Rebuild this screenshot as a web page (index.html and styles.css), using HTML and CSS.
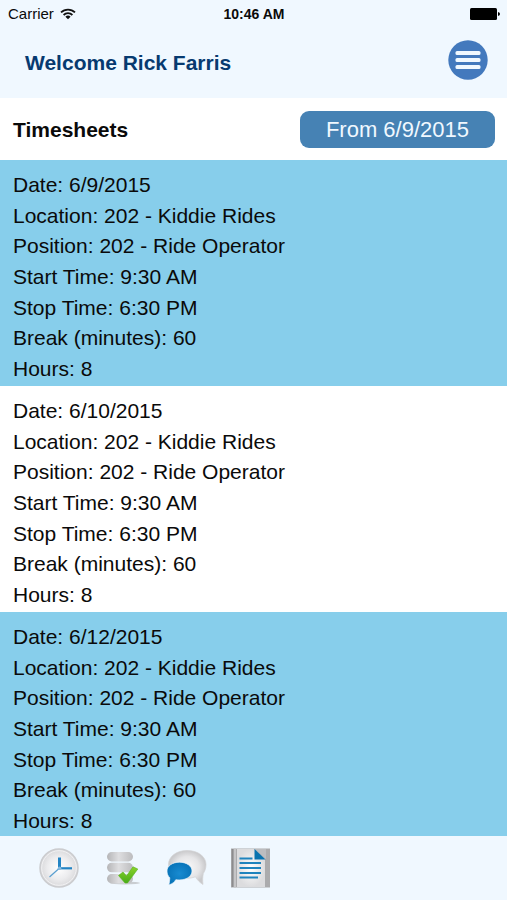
FILE: index.html
```html
<!DOCTYPE html>
<html lang="en">
<head>
<meta charset="utf-8">
<meta name="viewport" content="width=device-width, initial-scale=1">
<title>Timesheets</title>
<link rel="stylesheet" href="styles.css">
</head>
<body>
<div class="status">
  <div class="carrier">
    <span>Carrier</span>
    <svg width="16" height="12" viewBox="0 0 16 12" aria-hidden="true">
      <g fill="none" stroke="#111" stroke-width="1.8">
        <path d="M1 4.4a10 10 0 0 1 14 0"/>
        <path d="M3.6 7a6.300 6.300 0 0 1 8.800 0"/>
      </g>
      <path d="M5.400 8.700a3.700 3.700 0 0 1 5.200 0L8 11.300z" fill="#111"/>
    </svg>
  </div>
  <time class="clock">10:46 AM</time>
  <svg class="battery" width="30" height="12" viewBox="0 0 30 12" aria-hidden="true">
    <rect width="27" height="12" rx="1.500"/>
    <path d="M28 4q2 .5 2 2t-2 2z"/>
  </svg>
</div>
<header class="header">
  <h1 class="welcome">Welcome Rick Farris</h1>
  <button class="menu" type="button" aria-label="Menu">
    <svg width="40" height="40" viewBox="0 0 40 40" aria-hidden="true">
      <circle cx="20" cy="20" r="19.700" fill="#4379bd"/>
      <g fill="#f0f8ff">
        <rect x="7.500" y="11" width="25" height="4" rx="1.500"/>
        <rect x="7.500" y="18" width="25" height="4" rx="1.500"/>
        <rect x="7.500" y="25" width="25" height="4" rx="1.500"/>
      </g>
    </svg>
  </button>
</header>
<div class="toolbar">
  <h2 class="title">Timesheets</h2>
  <button class="from" type="button">From 6/9/2015</button>
</div>
<main class="list">
  <section class="record">
    <div>Date: 6/9/2015</div>
    <div>Location: 202 - Kiddie Rides</div>
    <div>Position: 202 - Ride Operator</div>
    <div>Start Time: 9:30 AM</div>
    <div>Stop Time: 6:30 PM</div>
    <div>Break (minutes): 60</div>
    <div>Hours: 8</div>
  </section>
  <section class="record">
    <div>Date: 6/10/2015</div>
    <div>Location: 202 - Kiddie Rides</div>
    <div>Position: 202 - Ride Operator</div>
    <div>Start Time: 9:30 AM</div>
    <div>Stop Time: 6:30 PM</div>
    <div>Break (minutes): 60</div>
    <div>Hours: 8</div>
  </section>
  <section class="record">
    <div>Date: 6/12/2015</div>
    <div>Location: 202 - Kiddie Rides</div>
    <div>Position: 202 - Ride Operator</div>
    <div>Start Time: 9:30 AM</div>
    <div>Stop Time: 6:30 PM</div>
    <div>Break (minutes): 60</div>
    <div>Hours: 8</div>
  </section>
</main>
<nav class="tabs" aria-label="Main">
  <a class="tab" href="#clock" aria-label="Clock">
    <svg width="40" height="40" viewBox="0 0 40 40" aria-hidden="true">
      <defs>
        <radialGradient id="face"><stop offset="0" stop-color="#fff"/><stop offset=".6" stop-color="#ececee"/><stop offset="1" stop-color="#d8d8da"/></radialGradient>
      </defs>
      <circle cx="20" cy="20" r="19" fill="url(#face)" stroke="#cbcccf" stroke-width="1.500"/>
      <circle cx="20" cy="20" r="17.300" fill="none" stroke="#f1f1f3"/>
      <path d="M20 20.500L10.500 29" stroke="#5a9fd0" stroke-width="1.200"/>
      <path d="M20.500 9.500v10.800" stroke="#2384c4" stroke-width="3"/>
      <path d="M19 20.300h14" stroke="#2384c4" stroke-width="2.200"/>
      <circle cx="20.500" cy="20.300" r="1.800" fill="#83b8df"/>
    </svg>
  </a>
  <a class="tab" href="#approved" aria-label="Approved records">
    <svg width="40" height="40" viewBox="0 0 40 40" aria-hidden="true">
      <defs>
        <linearGradient id="disk"><stop offset="0" stop-color="#b5b5b7"/><stop offset=".45" stop-color="#dedee0"/><stop offset="1" stop-color="#bcbcbe"/></linearGradient>
        <linearGradient id="tick" x2="0" y2="1"><stop offset="0" stop-color="#8bd32b"/><stop offset="1" stop-color="#48ac19"/></linearGradient>
      </defs>
      <ellipse cx="22" cy="35" rx="15" ry="1.500" fill="#c9cdd1"/>
      <g fill="url(#disk)">
        <rect x="4" y="4" width="26" height="9.500" rx="4.700"/>
        <rect x="4" y="14.800" width="26" height="9.500" rx="4.700"/>
        <rect x="4" y="26" width="26" height="9.500" rx="4.700"/>
      </g>
      <path d="M15.500 27.500l4.500-3.500 3.500 4L30 18.800l4.800 2.200L24.500 35h-2.500z" fill="url(#tick)" stroke="#55b31c" stroke-width=".6" stroke-linejoin="round"/>
    </svg>
  </a>
  <a class="tab" href="#messages" aria-label="Messages">
    <svg width="40" height="40" viewBox="0 0 40 40" aria-hidden="true">
      <defs>
        <radialGradient id="bubble"><stop offset="0" stop-color="#fafafa"/><stop offset=".65" stop-color="#e5e5e7"/><stop offset="1" stop-color="#c9c9cb"/></radialGradient>
        <radialGradient id="reply"><stop offset="0" stop-color="#188bd1"/><stop offset="1" stop-color="#0874b9"/></radialGradient>
      </defs>
      <path d="M20 2.500C9.500 2.500 1.500 8.500 1.500 16.500S9.500 30.300 20 30.300c3 0 6-.5 8.500-1.500 2 3.500 4.500 6 7.500 7.700-.5-4-.4-7.500.3-11 1.700-2.500 2.700-5.500 2.700-9 0-8-8-14-19-14z" fill="url(#bubble)" stroke="#d2d2d4" stroke-width=".7"/>
      <path d="M12.500 14.200C5.300 14.200 0 18 0 23c0 3 1 5 2.800 6.800 0 2.500-.4 4.800-1 7.200 3.500-1 5.700-3 7-5.300C18 33 25 29 25 23c0-5-5.500-8.800-12.500-8.800z" fill="url(#reply)" stroke="#edf5fb" stroke-width=".7"/>
    </svg>
  </a>
  <a class="tab" href="#timesheets" aria-label="Timesheets" aria-current="page">
    <svg width="40" height="40" viewBox="0 0 40 40" aria-hidden="true">
      <defs>
        <radialGradient id="paper"><stop offset="0" stop-color="#fff"/><stop offset="1" stop-color="#dcdcde"/></radialGradient>
      </defs>
      <rect y=".5" width="39" height="39" fill="#ababad"/>
      <path d="M1.500 1v38" stroke="#8c8c8e" stroke-width="1.500"/>
      <path d="M4 .5v39" stroke="#c5c5c7" stroke-width="2"/>
      <path d="M6 1h17l11 10v28H6z" fill="url(#paper)"/>
      <path d="M23 1l12 10V1z" fill="#bcbdc0"/>
      <path d="M23.500 1v10.500H34.500z" fill="#0873af"/>
      <path d="M8.500 10.500H21.500M8.500 15H30M8.500 20H30M8.500 25H30M8.500 29.500H27" stroke="#1f83bd" stroke-width="1.800"/>
    </svg>
  </a>
</nav>
</body>
</html>
```
FILE: styles.css
```css
* {
  box-sizing: border-box;
}

body {
  margin: 0;
  height: 100vh;
  display: flex;
  flex-direction: column;
  background: #fff;
  color: #0a0a0a;
  font-family: "Liberation Sans", Arial, sans-serif;
  font-size: 21px;
}

h1,
h2 {
  margin: 0;
}

button {
  border: 0;
  font-family: inherit;
  cursor: pointer;
}

svg {
  display: block;
}

.status {
  display: grid;
  grid-template-columns: 1fr auto 1fr;
  align-items: center;
  padding: 4px 7px 4px 8px;
  background: #f0f8ff;
  font-size: 14px;
  line-height: 20px;
}

.carrier {
  display: flex;
  align-items: center;
  gap: 6px;
  font-size: 15px;
}

.clock {
  font-weight: bold;
}

.battery {
  justify-self: end;
}

.header {
  display: flex;
  align-items: center;
  justify-content: space-between;
  padding: 12px 19px 18px 25px;
  background: #f0f8ff;
}

.welcome {
  padding-top: 6px;
  color: #073a70;
  font-size: 21px;
  line-height: 28px;
}

.menu {
  padding: 0;
  background: none;
  border-radius: 50%;
}

.toolbar {
  display: flex;
  align-items: center;
  justify-content: space-between;
  padding: 13px 12px 12px 13px;
}

.title {
  font-size: 21px;
  line-height: 28px;
}

.from {
  padding: 4px 26px;
  border-radius: 9px;
  background: #4682b4;
  color: #f0f8ff;
  font-size: 22px;
  line-height: 29px;
}

.list {
  flex: 1;
  min-height: 0;
  overflow-y: auto;
  scrollbar-width: none;
}

.record {
  display: grid;
  grid-auto-rows: 1fr;
  align-items: center;
  min-height: 226px;
  padding: 10px 13px 2px;
  line-height: 28px;
}

.record:nth-child(odd) {
  background: #87ceeb;
}

.tabs {
  display: flex;
  gap: 24px;
  padding: 12px 39px;
  background: #f0f8ff;
}
```
